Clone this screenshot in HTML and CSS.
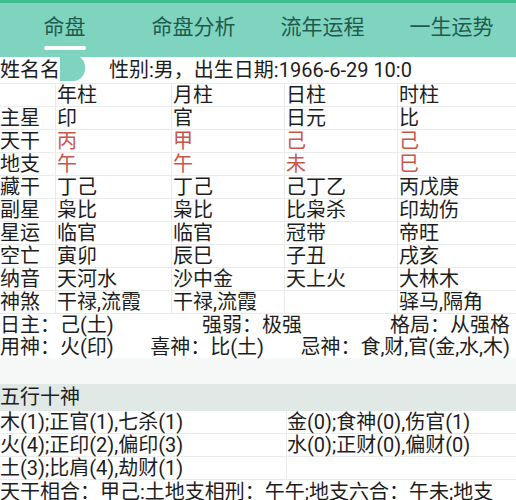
FILE: index.html
```html
<!DOCTYPE html>
<html lang="zh">
<head>
<meta charset="utf-8">
<link rel="stylesheet" href="styles.css">
</head>
<body>
<div class="topbar"></div>
<nav class="tabs">
  <div class="tab active"><span>命盘</span></div>
  <div class="tab"><span>命盘分析</span></div>
  <div class="tab"><span>流年运程</span></div>
  <div class="tab"><span>一生运势</span></div>
</nav>
<div class="info"><span>姓名名</span><span class="mask"></span><span class="infotext">性别:男，出生日期:1966-6-29 10:0</span></div>
<div class="grid">
  <div class="c"></div><div class="c">年柱</div><div class="c">月柱</div><div class="c">日柱</div><div class="c">时柱</div>
  <div class="c">主星</div><div class="c">印</div><div class="c">官</div><div class="c">日元</div><div class="c">比</div>
  <div class="c">天干</div><div class="c red">丙</div><div class="c red">甲</div><div class="c red">己</div><div class="c red">己</div>
  <div class="c">地支</div><div class="c red">午</div><div class="c red">午</div><div class="c red">未</div><div class="c red">巳</div>
  <div class="c">藏干</div><div class="c">丁己</div><div class="c">丁己</div><div class="c">己丁乙</div><div class="c">丙戊庚</div>
  <div class="c">副星</div><div class="c">枭比</div><div class="c">枭比</div><div class="c">比枭杀</div><div class="c">印劫伤</div>
  <div class="c">星运</div><div class="c">临官</div><div class="c">临官</div><div class="c">冠带</div><div class="c">帝旺</div>
  <div class="c">空亡</div><div class="c">寅卯</div><div class="c">辰巳</div><div class="c">子丑</div><div class="c">戌亥</div>
  <div class="c">纳音</div><div class="c">天河水</div><div class="c">沙中金</div><div class="c">天上火</div><div class="c">大林木</div>
  <div class="c">神煞</div><div class="c">干禄,流霞</div><div class="c">干禄,流霞</div><div class="c"></div><div class="c">驿马,隔角</div>
</div>
<div class="summary">
  <div class="srow"><span>日主：己(土)</span><span>强弱：极强</span><span>格局：从强格</span></div>
  <div class="srow"><span>用神：火(印)</span><span>喜神：比(土)</span><span>忌神：食,财,官(金,水,木)</span></div>
</div>
<div class="spacer"></div>
<div class="section">五行十神</div>
<div class="wx">
  <div class="w">木(1);正官(1),七杀(1)</div><div class="w">金(0);食神(0),伤官(1)</div>
  <div class="w">火(4);正印(2),偏印(3)</div><div class="w">水(0);正财(0),偏财(0)</div>
  <div class="w">土(3);比肩(4),劫财(1)</div><div class="w"></div>
</div>
<div class="relations">天干相合：甲己:土地支相刑：午午;地支六合：午未;地支三合：午未</div>
</body>
</html>
```

FILE: styles.css
```css
html, body {
  margin: 0;
  padding: 0;
  background: #ffffff;
  overflow: hidden;
}
body {
  width: 516px;
  height: 500px;
  font-family: Roboto, "Noto Sans CJK SC", "Noto Sans", sans-serif;
  font-size: 20px;
  color: #1d1d1d;
}
.topbar {
  height: 3px;
  background: #3fbd92;
}
.tabs {
  display: flex;
  height: 54px;
  background: #7fd4c0;
}
.tab {
  flex: 1;
  display: flex;
  justify-content: center;
  font-size: 21px;
  color: #1f5b4c;
  line-height: 48px;
}
.tab span {
  position: relative;
  display: inline-block;
  height: 54px;
}
.tab.active span::after {
  content: "";
  position: absolute;
  left: 0;
  right: 0;
  top: 43px;
  height: 4px;
  border-radius: 2px;
  background: #ffffff;
}
.info {
  display: flex;
  height: 26px;
  line-height: 26px;
  white-space: nowrap;
}
.mask {
  display: inline-block;
  width: 25px;
  height: 26px;
  margin-top: -2px;
  background: #7fd4c0;
  border-radius: 0 12px 12px 0;
}
.infotext {
  margin-left: 24px;
}
.grid {
  display: grid;
  grid-template-columns: 56px 116px 113px 113px 118px;
  grid-auto-rows: 23px;
  border-top: 1px solid #ebebeb;
}
.c {
  line-height: 22px;
  border-bottom: 1px solid #ebebeb;
  border-right: 1px solid #ebebeb;
  padding-left: 1px;
  white-space: nowrap;
}
.c:nth-child(5n+1) {
  padding-left: 0;
}
.c:nth-child(5n) {
  border-right: none;
}
.red {
  color: #c9564b;
}
.summary {
  padding-right: 6px;
}
.srow {
  display: flex;
  justify-content: space-between;
  line-height: 22px;
  white-space: nowrap;
}
.spacer {
  height: 26px;
  background: #f6f8f7;
}
.section {
  height: 27px;
  line-height: 26px;
  background: #e0e9e5;
}
.wx {
  display: grid;
  grid-template-columns: 287px 1fr;
  grid-auto-rows: 23px;
}
.w {
  line-height: 22px;
  border-bottom: 1px solid #ebebeb;
  white-space: nowrap;
}
.w:nth-child(2n+1) {
  border-right: 1px solid #ebebeb;
}
.relations {
  line-height: 24px;
  padding-right: 18px;
}
```
